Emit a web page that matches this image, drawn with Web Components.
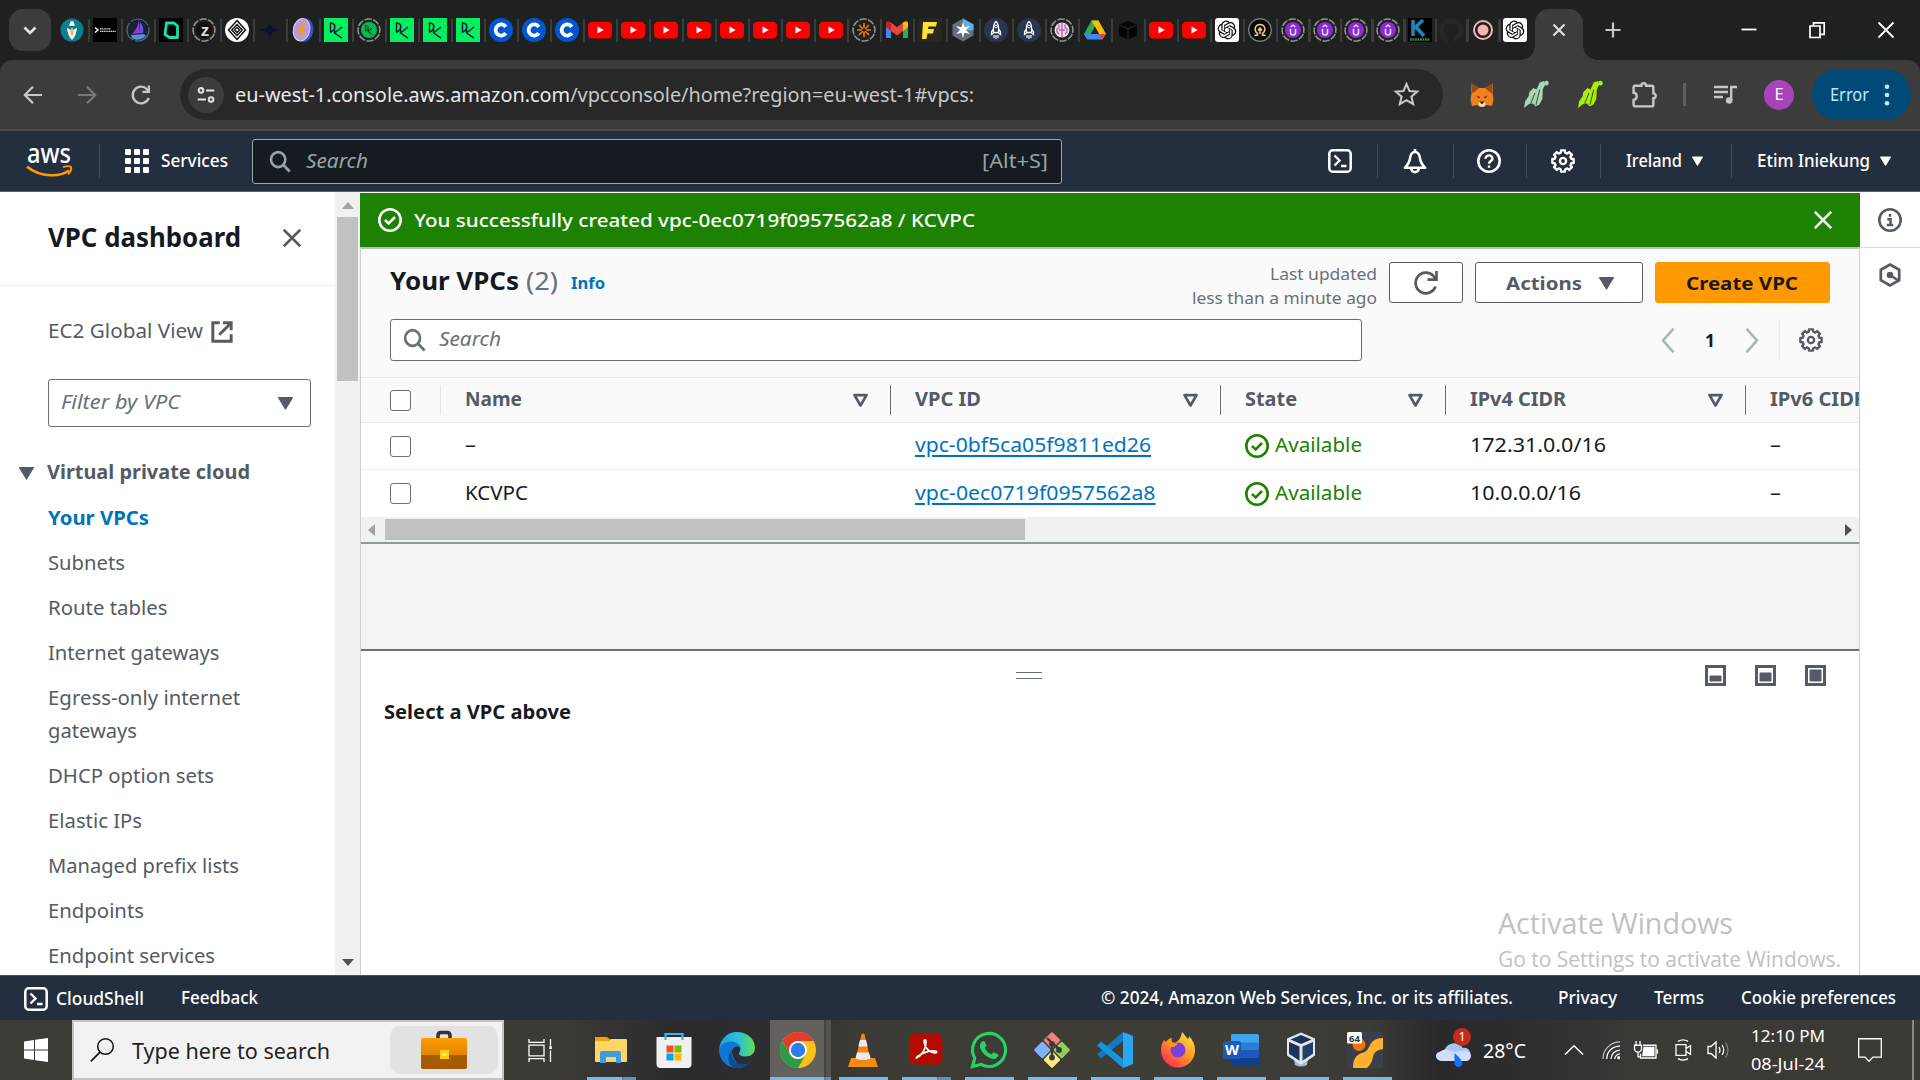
<!DOCTYPE html>
<html lang="en">
<head>
<meta charset="utf-8">
<title>VPC Console</title>
<style>
html,body{margin:0;padding:0}
body{width:1920px;height:1080px;overflow:hidden;background:#fff;font-family:"Noto Sans","Open Sans",sans-serif;font-size:17.5px;line-height:1.36}
</style>
</head>
<body>
<desktop-screen></desktop-screen>
<script>
/* ---------- icon library ---------- */
const ring = (c) => `<circle cx="12" cy="12" r="11" fill="none" stroke="#8e918f" stroke-width="1.6" stroke-dasharray="7.2 1.44" transform="rotate(20 12 12)"/>` + c;
const dc = (s, bg) => bg + `<path d="M6.500 14.500V5c5.500.6 6.200 5.700 0 9.500M10.500 8.500V15l7.500 5.200M18 9l-7.500 6" fill="none" stroke="${s}" stroke-width="1.4" stroke-linejoin="round"/>`;
const gear = (() => {
  let p = '';
  for (let i = 0; i < 8; i++) {
    [[-15, 8.7], [-10.500, 11], [10.500, 11], [15, 8.7]].forEach(([a, r]) => {
      const t = (i * 45 + a) * Math.PI / 180;
      p += (p ? 'L' : 'M') + (12 + r * Math.sin(t)).toFixed(2) + ' ' + (12 - r * Math.cos(t)).toFixed(2);
    });
  }
  return `<path d="${p}Z" fill="none" stroke="currentColor" stroke-width="2.4" stroke-linejoin="round" transform="translate(.2 .2) scale(.983)"/><circle cx="12" cy="12" r="3.100" fill="none" stroke="currentColor" stroke-width="2.400"/>`;
})();
const shellBox = '<rect x="1.300" y="1.300" width="21.400" height="21.400" rx="3.500" fill="none" stroke="currentColor" stroke-width="2.500"/><path d="M6.500 6.500l5 5-5 5M13 17h5.500" fill="none" stroke="currentColor" stroke-width="2.400"/>';
const okIcon = '<circle cx="12" cy="12" r="10.700" fill="none" stroke="currentColor" stroke-width="2.600"/><path d="M7 12l3.600 3.500L17 9" fill="none" stroke="currentColor" stroke-width="2.500"/>';
const rex = (c) => `<path d="M1 25l1-6 3.500-5 .5-3.500L10 6.500l3 1.500 3-6.500L20 0l1.500 3-2.500 5-.5 9-3 5-3.500 1.500-2.500-2.500-4 .500z" fill="${c}"/><circle cx="22.500" cy="2" r="2.200" fill="${c}"/><path d="M7 22l4.500-11m1 11l3.500-14" stroke="#3c3c3c" stroke-width=".9"/>`;
const openai = 'M22.2819 9.8211a5.9847 5.9847 0 0 0-.5157-4.9108 6.0462 6.0462 0 0 0-6.5098-2.9A6.0651 6.0651 0 0 0 4.9807 4.1818a5.9847 5.9847 0 0 0-3.9977 2.9 6.0462 6.0462 0 0 0 .7427 7.0966 5.98 5.98 0 0 0 .511 4.9107 6.051 6.051 0 0 0 6.5146 2.9001A5.9847 5.9847 0 0 0 13.2599 24a6.0557 6.0557 0 0 0 5.7718-4.2058 5.9894 5.9894 0 0 0 3.9977-2.9001 6.0557 6.0557 0 0 0-.7475-7.0729zm-9.022 12.6081a4.4755 4.4755 0 0 1-2.8764-1.0408l.1419-.0804 4.7783-2.7582a.7948.7948 0 0 0 .3927-.6813v-6.7369l2.02 1.1686a.071.071 0 0 1 .038.052v5.5826a4.504 4.504 0 0 1-4.4945 4.4944zm-9.6607-4.1254a4.4708 4.4708 0 0 1-.5346-3.0137l.142.0852 4.783 2.7582a.7712.7712 0 0 0 .7806 0l5.8428-3.3685v2.3324a.0804.0804 0 0 1-.0332.0615L9.74 19.9502a4.4992 4.4992 0 0 1-6.1408-1.6464zM2.3408 7.8956a4.485 4.485 0 0 1 2.3655-1.9728V11.6a.7664.7664 0 0 0 .3879.6765l5.8144 3.3543-2.0201 1.1685a.0757.0757 0 0 1-.071 0l-4.8303-2.7865A4.504 4.504 0 0 1 2.3408 7.872zm16.5963 3.8558L13.1038 8.364 15.1192 7.2a.0757.0757 0 0 1 .071 0l4.8303 2.7913a4.4944 4.4944 0 0 1-.6765 8.1042v-5.6772a.79.79 0 0 0-.407-.667zm2.0107-3.0231l-.142-.0852-4.7735-2.7818a.7759.7759 0 0 0-.7854 0L9.409 9.2297V6.8974a.0662.0662 0 0 1 .0284-.0615l4.8303-2.7866a4.4992 4.4992 0 0 1 6.6802 4.66zM8.3065 12.863l-2.02-1.1638a.0804.0804 0 0 1-.038-.0567V6.0742a4.4992 4.4992 0 0 1 7.3757-3.4537l-.142.0805L8.704 5.459a.7948.7948 0 0 0-.3927.6813zm1.0976-2.3654l2.602-1.4998 2.6069 1.4998v2.9994l-2.5974 1.4997-2.6067-1.4997Z';
const github = 'M12 .297c-6.63 0-12 5.373-12 12 0 5.303 3.438 9.8 8.205 11.385.6.113.82-.258.82-.577 0-.285-.01-1.04-.015-2.04-3.338.724-4.042-1.61-4.042-1.61C4.422 18.07 3.633 17.7 3.633 17.7c-1.087-.744.084-.729.084-.729 1.205.084 1.838 1.236 1.838 1.236 1.07 1.835 2.809 1.305 3.495.998.108-.776.417-1.305.76-1.605-2.665-.3-5.466-1.332-5.466-5.93 0-1.31.465-2.38 1.235-3.22-.135-.303-.54-1.523.105-3.176 0 0 1.005-.322 3.3 1.23.96-.267 1.98-.399 3-.405 1.02.006 2.04.138 3 .405 2.28-1.552 3.285-1.23 3.285-1.23.645 1.653.24 2.873.12 3.176.765.84 1.23 1.91 1.23 3.22 0 4.61-2.805 5.625-5.475 5.92.42.36.81 1.096.81 2.22 0 1.606-.015 2.896-.015 3.286 0 .315.21.69.825.57C20.565 22.092 24 17.592 24 12.297c0-6.627-5.373-12-12-12';

const ICONS = {
  /* favicons */
  flame: '<circle cx="12" cy="12" r="11.500" fill="#0b7f8c"/><path d="M12 22c-3-3-4.500-7-5-12 2 .5 3 1.500 3.500 2L12 10l1.500 2c.5-.500 1.500-1.500 3.500-2-.5 5-2 9-5 12z" fill="#fff"/><path d="M12 10l1.800 4-1.800 5-1.800-5z" fill="#e8b25a"/><path d="M10 5.500h4a1.500 1.500 0 010 2.500h-4a1.500 1.500 0 010-2.500z" fill="#fff"/><circle cx="12" cy="5" r="2" fill="#fff"/>',
  cere: '<rect width="24" height="24" fill="#000"/><path d="M2 9.500l3 2.500-3 2.500" fill="none" stroke="#fff" stroke-width="1.500"/><path d="M7 10.800h11M7 13.400h16" stroke="#ddd" stroke-width="1.300" stroke-dasharray="1.300 .5"/>',
  sail: '<circle cx="12" cy="12" r="11" fill="#1b1f33" stroke="#4b6da0" stroke-width="1.200" stroke-dasharray="20 2"/><path d="M13 1l1 14-8 1c4-4 6-8 7-15z" fill="#8a3ddb"/><path d="M14 4c3 4 4 7 3 11l-3 .500z" fill="#6b4ee0"/><path d="M5 17l13-1 2 2c-4 4-10 5-14 2z" fill="#5a8fd0"/>',
  okx: '<rect width="24" height="24" fill="#000"/><path d="M7.500 5h7.500l3.500 3v11.500h-8L6 16.500z" fill="none" stroke="#16e0b5" stroke-width="2.800" stroke-linejoin="round"/>',
  zring: ring('<circle cx="12" cy="12" r="8" fill="#111"/><text x="13" y="18" font-size="17" font-weight="700" font-family="Liberation Sans" fill="#ddd" text-anchor="middle">z</text>'),
  diamond: '<circle cx="12" cy="12" r="12" fill="#fff"/><path d="M12 2.500l8.500 9.500-8.500 9.500L3.500 12zM12 6.500l5.200 5.500-5.200 5.500L6.800 12z" fill="none" stroke="#111" stroke-width="1.500"/><path d="M12 9.500l2.500 2.500-2.500 2.500L9.500 12z" fill="none" stroke="#111" stroke-width="1.300"/>',
  star4: '<path d="M12 4c1 5 3 7 11 8-8 1-10 3-11 8-1-5-3-7-11-8 8-1 10-3 11-8z" fill="#0a1230"/>',
  bolt: '<ellipse cx="13.500" cy="12" rx="8.800" ry="11.800" fill="#3554c8" transform="rotate(12 12 12)"/><ellipse cx="10.500" cy="12" rx="8.200" ry="11.300" fill="#b99adf" stroke="#ddd2f2" stroke-width="1" transform="rotate(12 12 12)"/><path d="M13 4l-7 9h4l-2 8 8-10h-4l3-7z" fill="#f39a2c"/>',
  dcamp: dc('#05192d', '<rect width="24" height="24" fill="#03ef62"/>'),
  dcring: ring('<circle cx="12" cy="12" r="8" fill="#08b84f"/><g transform="translate(4.500 4.200) scale(.62)">' + dc('#05192d', '') + '</g>'),
  coursera: '<circle cx="12" cy="12" r="12" fill="#0056d2"/><path d="M16.800 15.200a5.600 5.600 0 110-6.400" fill="none" stroke="#fff" stroke-width="3.800"/>',
  yt: '<rect y="3.800" width="24" height="16.800" rx="4.200" fill="#f00"/><path d="M9.500 8.500v7l6.200-3.500z" fill="#fff"/>',
  burst: ring('<path d="M12 5v14M5 12h14M7 7l10 10M17 7L7 17" stroke="#e8741c" stroke-width="1.700"/><circle cx="12" cy="12" r="1.800" fill="#20211f"/>'),
  gmail: '<path d="M1 5v15h5V10z" fill="#4285f4"/><path d="M23 5v15h-5V10z" fill="#34a853"/><path d="M18 4.500l2-1c1.500-.6 3 .2 3 1.800V9l-5 4z" fill="#fbbc04"/><path d="M1 9V5.300c0-1.600 1.500-2.400 3-1.800l2 1V13z" fill="#c5221f"/><path d="M6 4.500l6 4.700 6-4.700V13l-6 4.500L6 13z" fill="#ea4335"/>',
  fyellow: '<rect width="24" height="24" fill="#2a2720"/><path d="M5 4h14l-1 4.500h-7.500l-.5 2.500h6l-1 4.500H9.500L8.500 21H4z" fill="#ffe32e"/>',
  hexstar: '<path d="M12 .500l10.500 6v11L12 23.500l-10.500-6v-11z" fill="#666e78"/><path d="M12 .500l10.500 6v6L12 12z" fill="#5ab0e8"/><path d="M12 4l1.500 5.300L19 8l-4 4 4 4-5.500-1.300L12 20l-1.500-5.300L5 16l4-4-4-4 5.500 1.300z" fill="#fff"/>',
  rocket: '<circle cx="12" cy="12" r="12" fill="#2c3650"/><path d="M12 3.500c3 2.500 3 6 2.500 11h-5C9 9.500 9 6 12 3.500zM9.300 11L7.500 14v2.500l2-1.500M14.700 11l1.800 3v2.500l-2-1.500" fill="none" stroke="#fff" stroke-width="1.300"/><circle cx="12" cy="8.500" r="1.400" fill="none" stroke="#fff"/><path d="M10 17v3M12 17v4M14 17v3" stroke="#fff" stroke-width="1.200"/>',
  pinkring: ring('<circle cx="12" cy="12" r="7.500" fill="#e8dcef"/><path d="M12 5v14M9 6.500v3L7 11v3l2 2M15 6.500v3l2 1.500v3l-2 2M9 12h6" fill="none" stroke="#c25a9a" stroke-width="1.300"/>'),
  drive: '<path d="M8.500 2.500h7L8 16l-3.500 5.500L1 16z" fill="#34a853"/><path d="M8.500 2.500h7L23 16h-7z" fill="#fbbc04"/><path d="M1 16h22l-3.500 5.500h-15z" fill="#4285f4"/><path d="M23 16h-7l3.500 5.500z" fill="#ea4335"/><path d="M12 9l4 7H8z" fill="#20211f"/>',
  cube: '<path d="M12 3l9 3.500v11L12 21.500 3 17.500v-11z" fill="#050505"/><path d="M3.500 7L12 10.500 20.500 7M12 10.500v10.500" stroke="#262826" stroke-width="1.200" fill="none"/>',
  chatgpt: `<rect width="24" height="24" rx="3" fill="#fff"/><path d="${openai}" transform="translate(2.600 2.600) scale(.783)" fill="#111"/>`,
  omega: '<circle cx="12" cy="12" r="11.300" fill="#0a0a0a" stroke="#777" stroke-width="1.400"/><path d="M6.500 17.300h3v-2C5.500 12.500 7 6.500 12 6.500s6.500 6 2.500 8.800v2h3M12 10v6M10 12.500L12 10l2 2.500" fill="none" stroke="#e8d28a" stroke-width="1.500"/>',
  udemy: ring('<circle cx="12" cy="12" r="8" fill="#8a2bd0"/><path d="M9.500 10.800v3.700a2.500 2.500 0 005 0v-3.700M9.700 8.800L12 7.200l2.300 1.600" fill="none" stroke="#e6d6f5" stroke-width="1.600"/>'),
  kcamp: '<rect width="24" height="24" fill="#000"/><path d="M5 2v16M6 10.500l9-8.500M8 9l8 9" fill="none" stroke="#1d86b8" stroke-width="3.600"/><path d="M2 21.500h20" stroke="#3c8a4a" stroke-width="2.400" stroke-dasharray="1.800 .7"/>',
  github: `<path d="${github}" fill="#22282c"/>`,
  rec: '<circle cx="12" cy="12" r="9" fill="none" stroke="#f5b5b3" stroke-width="2"/><circle cx="12" cy="12" r="5.500" fill="#f5b5b3"/>',
  /* browser chrome */
  chevdown: '<path d="M6.500 9.500l5.500 5.500 5.500-5.500" fill="none" stroke="#e3e3e3" stroke-width="2.600"/>',
  close: '<path d="M6.500 6.500l11 11M17.500 6.500l-11 11" stroke="currentColor" stroke-width="2.200"/>',
  plus: '<path d="M12 4.500v15M4.500 12h15" stroke="#c7c7c7" stroke-width="2.200"/>',
  winmin: '<path d="M4.500 11.500h15" stroke="#fff" stroke-width="1.800"/>',
  winmax: '<path d="M5 8h10v11.500H5zM8.500 8V4.800h10.700v11.500H15" fill="none" stroke="#fff" stroke-width="1.700"/>',
  winx: '<path d="M4.500 4.500l15 15M19.500 4.500l-15 15" stroke="#fff" stroke-width="1.800"/>',
  back: '<path d="M21 12H4M12 3.800L3.800 12l8.200 8.200" fill="none" stroke="currentColor" stroke-width="2.200"/>',
  fwd: '<path d="M3 12h17M12 3.800l8.200 8.200-8.200 8.200" fill="none" stroke="currentColor" stroke-width="2.200"/>',
  reload: '<path d="M19.800 15a8.300 8.300 0 11-1.600-8.600L20 8.300" fill="none" stroke="#c7c7c7" stroke-width="2.300"/><path d="M21 2.500V10h-7.500V7.700H18.700V2.500z" fill="#c7c7c7"/>',
  tune: '<g fill="none" stroke="#e3e3e3" stroke-width="2.200"><circle cx="6.500" cy="7" r="2.500"/><path d="M12 7h9M3 17h9"/><circle cx="17.500" cy="17" r="2.500"/></g>',
  starO: '<path d="M12 2l2.900 6.700 7.300.6-5.500 4.800 1.700 7.100L12 17.400l-6.400 3.800 1.700-7.100L1.800 9.300l7.300-.6z" fill="none" stroke="#c7c7c7" stroke-width="2"/>',
  fox: '<path d="M1 .500l8 4.500h6l8-4.500-.500 10 1 6.500-1.500 6-5.500-1-2.500 2h-4l-2.500-2-5.500 1-1.500-6 1-6.500z" fill="#f0821e"/><path d="M1 .500l8 4.500-6.500 5.500zM23 .500l-8 4.500 6.500 5.500z" fill="#9a4a16"/><path d="M9 19.500h6l.5 2-1.500 2h-4l-1.500-2z" fill="#ddd"/><path d="M10 18.500h4l-1 2.300h-2z" fill="#222"/><path d="M6.500 12.500l3.500 1.500-1.200 1.400zM17.500 12.500L14 14l1.200 1.400z" fill="#3a2412"/>',
  rexA: rex('#a6d8b8'), rexB: rex('#a8f000'),
  puzzle: '<path d="M9 3.500a2.200 2.200 0 014.500 0H19a1.500 1.500 0 011.500 1.500v5.500a2.200 2.200 0 010 4.500v6a1.500 1.500 0 01-1.500 1.500H3A1.500 1.500 0 011.500 21v-4.500c4 0 4-6.500 0-6.500V5A1.500 1.500 0 013 3.500z" fill="none" stroke="#c7c7c7" stroke-width="2.300"/>',
  queue: '<path d="M1 4h14M1 9h14M1 14h9" stroke="#c7c7c7" stroke-width="2.400"/><path d="M18.200 17V4H24" fill="none" stroke="#c7c7c7" stroke-width="2.300"/><circle cx="16.200" cy="17.500" r="3.300" fill="#c7c7c7"/>',
  dots3: '<g fill="#c2e7ff"><circle cx="12" cy="3.700" r="2.300"/><circle cx="12" cy="12" r="2.300"/><circle cx="12" cy="20.300" r="2.300"/></g>',
  /* console */
  smile: '<path d="M1 2C15 14 34 13 43 6" fill="none" stroke="#ff9900" stroke-width="2.800"/><path d="M37 2.200c4-1.200 7-1.200 8 0 .8 1.500-.5 5.500-3 8" fill="none" stroke="#ff9900" stroke-width="2"/>',
  grid9: '<g fill="#fff">' + [0, 9, 18].map(y => [0, 9, 18].map(x => `<rect x="${x}" y="${y}" width="6" height="6" rx="1"/>`).join('')).join('') + '</g>',
  search: '<circle cx="10" cy="10" r="7.800" fill="none" stroke="currentColor" stroke-width="2.800"/><path d="M15.500 15.500l7 7" stroke="currentColor" stroke-width="3"/>',
  shell: shellBox,
  bell: '<path d="M1.800 18.800c3-3 4.700-5 5.200-9.300.4-3.700 2-6.500 5-6.500s4.600 2.800 5 6.500c.5 4.300 2.200 6.300 5.200 9.300z" fill="none" stroke="currentColor" stroke-width="2.500" stroke-linejoin="round"/><path d="M12 0v3M8.300 19.500a3.700 3.700 0 007.400 0" stroke="currentColor" stroke-width="2.600" fill="none"/>',
  help: '<circle cx="12" cy="12" r="10.700" fill="none" stroke="currentColor" stroke-width="2.600"/><path d="M8.500 9.700a3.500 3.300 0 117 0c0 2.300-3.500 2.400-3.500 5" fill="none" stroke="currentColor" stroke-width="2.400"/><path d="M12 16.500v2.300" stroke="currentColor" stroke-width="2.400"/>',
  gear, ok: okIcon,
  tri: '<path d="M1 4h22L12 21z" fill="currentColor" stroke="currentColor" stroke-width="2" stroke-linejoin="round"/>',
  trio: '<path d="M3.500 4.500h17L12 19z" fill="none" stroke="currentColor" stroke-width="3.800" stroke-linejoin="round"/>',
  x: '<path d="M3 3l18 18M21 3L3 21" stroke="currentColor" stroke-width="2.700"/>',
  ext: '<path d="M9.500 2H2v20h20v-7.500M13 2h9v8M21 3L9 15" fill="none" stroke="currentColor" stroke-width="3.200"/>',
  refresh: '<path d="M21.600 15.500A10.300 10.300 0 1119.500 5l2 3" fill="none" stroke="currentColor" stroke-width="2.700"/><path d="M22.500 0v8.700h-9" fill="none" stroke="currentColor" stroke-width="2.700"/>',
  left: '<path d="M17.500 1.500L7 12l10.500 10.500" fill="none" stroke="currentColor" stroke-width="2.500"/>',
  right: '<path d="M6.500 1.500L17 12 6.500 22.500" fill="none" stroke="currentColor" stroke-width="2.500"/>',
  info: '<circle cx="12" cy="12" r="10.700" fill="none" stroke="currentColor" stroke-width="2.600"/><path d="M12 6v2.700M9.300 11.300H12.500v5M8.800 17h6.400" fill="none" stroke="currentColor" stroke-width="2.500"/>',
  hex: '<path d="M12 1.500l9.200 5.200v10.600L12 22.500l-9.200-5.200V6.700z" fill="none" stroke="currentColor" stroke-width="2.700"/><circle cx="12" cy="12" r="3.300" fill="currentColor"/><path d="M12 12l7.500 5" stroke="currentColor" stroke-width="2.600"/>',
  p1: '<rect x="1.500" y="1.500" width="18" height="18" fill="none" stroke="currentColor" stroke-width="3"/><rect x="4.500" y="10.500" width="12" height="6" rx="1" fill="currentColor"/>',
  p2: '<rect x="1.500" y="1.500" width="18" height="18" fill="none" stroke="currentColor" stroke-width="3"/><rect x="4.500" y="7.500" width="12" height="9" rx="1" fill="currentColor"/>',
  p3: '<rect x="1.500" y="1.500" width="18" height="18" fill="none" stroke="currentColor" stroke-width="3"/><rect x="4.500" y="4.500" width="12" height="12" rx="1" fill="currentColor"/>',
  /* task bar */
  win: '<path d="M0 3.400l10-1.400v9.500H0zM11 1.800L24 0v11.500H11zM0 12.500h10V22L0 20.600zM11 12.500h13V24l-13-1.800z" fill="#fff"/>',
  wsearch: '<circle cx="15.500" cy="8.500" r="7.800" fill="none" stroke="#111" stroke-width="1.500"/><path d="M10 14.200L.800 23.400" stroke="#111" stroke-width="1.700"/>',
  briefcase: '<defs><linearGradient id="b" x2="0" y2="1"><stop stop-color="#ff9c00"/><stop offset="1" stop-color="#c97200"/></linearGradient></defs><path d="M17 8V4.500Q17 1.500 20 1.500h6q3 0 3 3V8" fill="none" stroke="#333" stroke-width="3.500"/><rect y="7" width="46" height="31" rx="2" fill="url(#b)"/><path d="M0 24h46v12a2 2 0 01-2 2H2a2 2 0 01-2-2z" fill="#a85a00"/><rect x="19" y="19" width="9" height="9" fill="#ffcf00"/><rect x="21.500" y="22" width="4" height="3" fill="#fff08a"/>',
  taskview: '<path d="M1 0v3.500h15V0M1 24v-3.500h15V24M1 6.500h15v11H1z" fill="none" stroke="#fff" stroke-width="1.300"/><path d="M22.500 0v7M22.500 12v12" stroke="#fff" stroke-width="1.300"/><rect x="21.300" y="7.500" width="2.500" height="3" fill="#fff"/>',
  explorer: '<path d="M2 5h12l3 2.500h16V29a1 1 0 01-1 1H3a1 1 0 01-1-1z" fill="#e5a50a"/><path d="M2 9h14l2-2h15a1 1 0 011 1v21a1 1 0 01-1 1H3a1 1 0 01-1-1z" fill="#ffd565"/><path d="M7 31V21a2 2 0 012-2h17a2 2 0 012 2v10h-5v-6H13v6z" fill="#3f9be0"/>',
  store: '<path d="M9.500 8V2h17v6" fill="none" stroke="#35b8e8" stroke-width="2.200"/><path d="M.500 5h35v27a4 4 0 01-4 4h-27a4 4 0 01-4-4z" fill="#f1f1f1"/><path d="M10.500 13.500h7v7h-7z" fill="#f25022"/><path d="M18.500 13.500h7v7h-7z" fill="#7fba00"/><path d="M10.500 21.500h7v7h-7z" fill="#00a4ef"/><path d="M18.500 21.500h7v7h-7z" fill="#ffb900"/><path d="M9.500 8V5M26.500 8V5" stroke="#35b8e8" stroke-width="2.200"/>',
  edge: '<defs><linearGradient id="e" x1="0" x2="1"><stop stop-color="#1d9fe0"/><stop offset=".55" stop-color="#2ac3d6"/><stop offset="1" stop-color="#62dd4e"/></linearGradient></defs><path d="M0 18C1 7 8 0 18 0c10 0 18 7 18 15.500 0 6-4 9-9.500 9-4.500 0-6.500-1.500-6.500-3 0-1 1.500-2 1.500-4.500 0-3-3-6-7.500-6-6 0-12 4-14 7z" fill="url(#e)"/><path d="M0 18c1-5 6-9 13-8.500 5 .5 8.500 4 8.500 7-1-1.500-2-2-3.500-2-3 0-6 3.500-4.500 8.500C15 29 20 34 26 34c-2.500 1.500-5 2-8 2C8 36 0 28 0 18z" fill="#0f78d4"/><path d="M13.500 17c-3 5 0 11 5 14 5 2.500 11 1.500 15-3.500-2.500 5-9 8.500-15.500 8.500-7 0-10-8-8-13 .500-2.500 2-4.500 3.500-6z" fill="#104a8e"/>',
  chrome: '<circle cx="18" cy="18" r="18" fill="#fbc116"/><path d="M2.400 9A18 18 0 0133.600 9H18a9 9 0 00-7.800 13.500z" fill="#e33b2e"/><path d="M2.400 9l7.800 13.500A9 9 0 0025.800 22.500L18 36A18 18 0 012.400 9z" fill="#2a9b48"/><circle cx="18" cy="18" r="9" fill="#fff"/><circle cx="18" cy="18" r="7.200" fill="#2f7bf0"/>',
  vlc: '<path d="M6 26h24l3 9H3z" fill="#f68d11"/><path d="M10 30L16.500 2.500q1.500-2 3 0L26 30q-8 4-16 0z" fill="#f68412"/><path d="M15 8h6l1.700 6.500h-9.400zM12 20.500h12l1.600 6q-7.600 3-15.200 0z" fill="#eaeaea"/>',
  acrobat: '<rect x="1.500" y="1.500" width="33" height="31" rx="6" fill="#b30b00"/><path d="M8.500 26c6-3 10-10 9.500-17 0-1.500-2.200-1.500-2 .5.500 6 5 11 11.500 11.500 1.500 0 1.500-1.800 0-2-6-.8-13 2-18 5.500-1 1-1.500 1.500-1 1.500z" fill="none" stroke="#fff" stroke-width="1.700"/>',
  whatsapp: '<path d="M1.500 34.500l2.300-8.300A16.500 16.500 0 1110 32.300z" fill="none" stroke="#25d366" stroke-width="3.100"/><path d="M10.500 10c1.500-1.500 3-1.200 3.700.5l1.200 2.800c.2 1-1.700 2-1.400 3 1.200 2.800 3.500 5 6.200 6 1 .3 2-2.200 3-1.900l3.200 1.500c1.300.7 1 2 .2 3.200-1.500 2-4 2.200-6.300 1.300-5.500-2-9.800-6-11.200-11-.5-2 .2-4 1.400-5.400z" fill="#25d366"/>',
  git: '<g transform="rotate(45 18 18)"><rect x="5" y="5" width="12.300" height="12.300" rx="1.500" fill="#f37f7f"/><rect x="18.700" y="5" width="12.300" height="12.300" rx="1.500" fill="#8ecf5f"/><rect x="5" y="18.700" width="12.300" height="12.300" rx="1.500" fill="#80b3ff"/><rect x="18.700" y="18.700" width="12.300" height="12.300" rx="1.500" fill="#ffe680"/></g><path d="M13 6l5 5v15M18 11l8 7" fill="none" stroke="#3d3c36" stroke-width="2.400"/><circle cx="18" cy="12" r="2.900" fill="#3d3c36"/><circle cx="25" cy="18" r="2.900" fill="#3d3c36"/><circle cx="18" cy="25.500" r="2.900" fill="#3d3c36"/>',
  vscode: '<path d="M26 0l10 4v28l-10 4z" fill="#2aa5f0"/><path d="M26 9L4 26.500.500 23V22L26 0z" fill="#0d7cc4"/><path d="M26 27L4 9.500.500 13v1L26 36z" fill="#1496de"/>',
  firefox: '<defs><linearGradient id="f" x1="1" y1="0" x2=".2" y2="1"><stop stop-color="#fff04a"/><stop offset=".5" stop-color="#ff9a1f"/><stop offset="1" stop-color="#ff2a57"/></linearGradient></defs><path d="M22 0c3 3 4 5 6 7 1-1 1-2 1-3 4 4 6 9 6 14a17 17 0 01-34 1c0-5 1-8 3-11l2 2c2-3 4-4 6-4-1 2 0 4 1 5 4 0 8-4 9-11z" fill="url(#f)"/><circle cx="18" cy="18" r="7.500" fill="#7b3fe0"/><path d="M6 10c4-1 8 1 12 2-2 1-3 3-5 3-3 0-5-2-7-5z" fill="#ff980e"/>',
  word: '<path d="M9 2h25a2 2 0 012 2v7H8V3z" fill="#41a5ee"/><path d="M8 10.500h28v8H8z" fill="#2b7cd3"/><path d="M8 18.500h28V26H8z" fill="#185abd"/><path d="M8 26h28v6a2 2 0 01-2 2H10a2 2 0 01-2-2z" fill="#103f91"/><rect y="9" width="18" height="18" rx="2" fill="#1b59bd"/><text x="9" y="23.300" font-size="14.500" font-weight="700" font-family="Open Sans" fill="#fff" text-anchor="middle">W</text>',
  vbox: '<path d="M11 27h14l-1 6q-6 3-12 0z" fill="#a9b7cf"/><path d="M18 .500l14 6v17L18 33 4 23.500v-17z" fill="#dfe6f2"/><path d="M18 3l10.500 4.500L18 12 7.500 7.500z" fill="#1c3458"/><path d="M6 10l10.500 4.500v14.200L6 21.800z" fill="#1c3458"/><path d="M30 10l-10.500 4.500v14.200L30 21.800z" fill="#233f66"/>',
  n64: '<rect width="36" height="36" fill="#3b3f4b"/><path d="M6 36c0-9 3-13 9-15 5-1.500 6-4 8-8 2-4 6-7 13-7v11c-6 1-9 3-10 8-1 6-4 9-6 11z" fill="#ffb12e"/><circle cx="12" cy="12.500" r="6.500" fill="#f37312"/><rect x="0" y="0" width="15" height="11.500" rx="1.500" fill="#fff"/><text x="7.500" y="9.500" font-size="9.500" font-weight="700" font-family="Open Sans" fill="#333" text-anchor="middle">64</text>',
  weather: '<path d="M9 20C9 9 23 7 27 15c8-2 11 11 3 13H8C-2 28-1 17 9 20z" fill="#a9c4f7"/><path d="M6 18c7-4 10 2 15 1s11-4 14 3c0 4-2 6-5 6H8c-6 0-8-5-6-8z" fill="#cfdffb"/><path d="M19 20q9 8 7.500 11.500-3.500 5-7.500 0z" fill="#1272f5"/>',
  up: '<path d="M0 9.500L9 .800l9 8.700" fill="none" stroke="#fff" stroke-width="1.500"/>',
  wifi: '<g fill="none" stroke="#fff" stroke-width="1.300"><path d="M1 19C1 9 9 1 19 1" stroke-opacity=".7"/><path d="M5 19C5 11 11 5.500 19 5.500M9.500 19c0-5 4-9.500 9.500-9.500M13.500 19c0-3 2.500-5.500 5.500-5.500"/></g><circle cx="17.500" cy="17.500" r="1.600" fill="#fff"/>',
  battery: '<path d="M9 4h13v12H6.500V12" fill="none" stroke="#fff" stroke-width="1.300"/><path d="M9.500 5.500h11v9H8z" fill="#fff"/><path d="M23.300 8v4" stroke="#fff" stroke-width="1.500"/><path d="M2 0v4M6 0v4M.500 4h7v3a3.500 3.500 0 01-7 0zM4 11v4h3" fill="none" stroke="#fff" stroke-width="1.300"/>',
  cam: '<path d="M1 6h10v11H1zM11 10l4.500-3v9L11 13M3 2.500q5-3 10 0M3 20.500q5 3 10 0" fill="none" stroke="#fff" stroke-width="1.300"/>',
  speaker: '<path d="M1 6.500h3L9 2v16l-5-4.500H1z" fill="none" stroke="#fff" stroke-width="1.300"/><path d="M12 7q2 3 0 6M15 5q3.500 5 0 10" fill="none" stroke="#fff" stroke-width="1.200"/><path d="M18.500 2.500q5 7.500 0 15" fill="none" stroke="#888" stroke-width="1.200"/>',
  notif: '<path d="M.7.700h22.600v17.600H15l-4 4-4-4H.7z" fill="none" stroke="#fff" stroke-width="1.300"/>',
};

/* <ui-icon name w h vb> : one inline vector icon */
customElements.define('ui-icon', class extends HTMLElement {
  connectedCallback() {
    const w = this.getAttribute('w') || 24, h = this.getAttribute('h') || w, vb = this.getAttribute('vb') || '24 24';
    this.attachShadow({ mode: 'open' }).innerHTML =
      `<style>:host{display:block;flex:none}svg{display:block;overflow:visible}</style><svg width="${w}" height="${h}" viewBox="0 0 ${vb}" preserveAspectRatio="none">${ICONS[this.getAttribute('name')]}</svg>`;
  }
});

/* <fit-text w> : one line of text set to an exact advance width */
customElements.define('fit-text', class extends HTMLElement {
  connectedCallback() {
    const w = +this.getAttribute('w');
    this.attachShadow({ mode: 'open' }).innerHTML =
      `<style>:host{display:block;flex:none;width:${w}px;white-space:nowrap}span{display:inline-block;transform-origin:0 50%}</style><span><slot></slot></span>`;
    const s = this.shadowRoot.querySelector('span');
    s.style.transform = `scaleX(${w / s.getBoundingClientRect().width})`;
  }
});

function component(name, css, html) {
  const t = document.createElement('template');
  t.innerHTML = `<style>*{box-sizing:border-box}${css}</style>${html}`;
  customElements.define(name, class extends HTMLElement {
    connectedCallback() {
      if (this.shadowRoot) return;
      this.attachShadow({ mode: 'open' }).append(t.content.cloneNode(true));
    }
  });
}
const ic = (n, w = 24, h = w, vb = '24 24', ml = 0, extra = '') => `<ui-icon name="${n}" w="${w}" h="${h}" vb="${vb}" style="margin-left:${ml}px;${extra}"></ui-icon>`;
const tx = (s, w, ml = 0, extra = '') => `<fit-text w="${w}" style="margin-left:${ml}px;${extra}">${s}</fit-text>`;

/* ---------- tab strip ---------- */
const favs = 'flame cere sail okx zring diamond star4 bolt dcamp dcring dcamp dcamp dcamp coursera coursera coursera yt yt yt yt yt yt yt yt burst gmail fyellow hexstar rocket rocket pinkring drive cube yt yt chatgpt omega'.split(' ');
const favs2 = 'udemy udemy udemy udemy kcamp github rec chatgpt'.split(' ');
component('tab-strip', `
:host{display:flex;height:60px;background:#1f2120;align-items:center}
.menu{width:42px;height:42px;margin-left:9px;border-radius:14px;background:#3c3c3c;display:grid;place-items:center}
.tabs{display:flex;margin-left:9px}
.t{width:33px;display:flex;align-items:center}
.t i{width:2.500px;height:23px;background:#3c3c3c;margin-left:3.800px}
.t.s{width:31.700px}.t.s i{margin-left:3px}
.t:last-child i{visibility:hidden}
.active{position:relative;align-self:flex-end;width:48px;height:51px;margin-left:0;border-radius:14px 14px 0 0;background:#3c3c3c;display:grid;place-items:center;padding-bottom:9px;color:#dedede}
.active::before,.active::after{content:"";position:absolute;bottom:0;width:14px;height:14px}
.active::before{left:-14px;background:radial-gradient(circle at 0 0,#0000 13.500px,#3c3c3c 14px)}
.active::after{right:-14px;background:radial-gradient(circle at 100% 0,#0000 13.500px,#3c3c3c 14px)}
`, `<div class="menu">${ic('chevdown')}</div><div class="tabs">${favs.map(f => `<div class="t">${ic(f)}<i></i></div>`).join('')}${favs2.map(f => `<div class="t s">${ic(f)}<i></i></div>`).join('')}</div>
<div class="active">${ic('close')}</div>${ic('plus', 24, 24, '24 24', 18)}${ic('winmin', 24, 24, '24 24', 112)}${ic('winmax', 24, 24, '24 24', 44)}${ic('winx', 24, 24, '24 24', 45)}`);

/* ---------- address bar ---------- */
component('browser-toolbar', `
:host{display:block;height:71px;background:#1f2120}
.bar{display:flex;align-items:center;height:71px;background:#3c3c3c;border-bottom:2px solid #4a4a48;border-radius:12px 12px 0 0;color:#c7c7c7}
.omni{display:flex;align-items:center;width:1263px;height:51px;margin-left:27px;border-radius:26px;background:#282828;font-size:20.500px;color:#c7c7c7}
.site{width:36px;height:36px;border-radius:50%;background:#3c3c3c;display:grid;place-items:center;margin-left:7.500px}
b{font-weight:400;color:#e8e8e8}
.sep{width:3px;height:23px;background:#5f6063;margin-left:26px}
.av{width:30px;height:30px;border-radius:50%;background:#a943ba;color:#fff;display:grid;place-items:center;margin-left:27px;font-size:16.500px}
.err{display:flex;align-items:center;width:99px;height:51px;border-radius:26px;background:#004a77;color:#c2e7ff;margin-left:18px;font-size:17.500px}
`, `<div class="bar">${ic('back', 24, 24, '24 24', 21)}${ic('fwd', 24, 24, '24 24', 30, 'color:#777')}${ic('reload', 24, 24, '24 24', 30)}
<div class="omni"><div class="site">${ic('tune', 22)}</div>${tx('<b>eu-west-1.console.aws.amazon.com</b>/vpcconsole/home?region=eu-west-1#vpcs:', 739, 11.500)}${ic('starO', 25, 25, '24 24', 420)}</div>
${ic('fox', 24, 24, '24 24', 27)}${ic('rexA', 25, 28, '24 26', 29)}${ic('rexB', 25, 28, '24 26', 29)}${ic('puzzle', 25, 26, '24 24', 30)}<div class="sep"></div>${ic('queue', 24, 24, '24 24', 27)}
<div class="av">E</div><div class="err">${tx('Error', 39, 18)}${ic('dots3', 24, 24, '24 24', 6)}</div></div>`);

/* ---------- AWS navigation ---------- */
component('aws-nav', `
:host{display:flex;align-items:center;height:61px;background:#232f3e;border-bottom:1px solid #56606c;color:#fff;font-size:17.500px;font-weight:500}
.logo{width:46px;height:38px;margin-left:26px;display:flex;flex-direction:column;font-size:27px;line-height:22px;font-weight:500}
.d{width:1px;height:34px;background:#414d5c}
.s{display:flex;align-items:center;width:810px;height:45px;margin-left:25px;border:1px solid #9ba7b0;border-radius:3px;background:#161a21;color:#95a5a6;font-size:19.500px;font-weight:400}
`, `<div class="logo">${tx('aws', 44, 1)}<ui-icon name="smile" w="46" h="12" vb="46 13" style="margin-top:1px"></ui-icon></div>
<div class="d" style="margin-left:27px"></div>${ic('grid9', 24, 24, '24 24', 25)}${tx('Services', 67, 11.500)}
<div class="s" style="margin-left:24.500px">${ic('search', 22, 23, '24 24', 16)}${tx('<i>Search</i>', 62, 14.500)}${tx('[Alt+S]', 66, 614)}</div>
${ic('shell', 24, 24, '24 24', 266)}<div class="d" style="margin-left:25px"></div>${ic('bell', 24, 24, '24 24', 25)}<div class="d" style="margin-left:26px"></div>${ic('help', 24, 24, '24 24', 23)}<div class="d" style="margin-left:25px"></div>${ic('gear', 24, 24, '24 24', 24)}<div class="d" style="margin-left:25px"></div>
${tx('Ireland', 56, 25)}${ic('tri', 11, 12, '24 24', 10)}<div class="d" style="margin-left:28px"></div>${tx('Etim Iniekung', 113, 25)}${ic('tri', 11, 12, '24 24', 10)}`);

/* ---------- side navigation ---------- */
component('side-nav', `
:host{display:flex;width:360px;background:#fff;color:#545b64;font-size:19px;overflow:hidden}
.c{width:335px;overflow:hidden}
.h{display:flex;align-items:center;height:94px;padding:0 0 2px 48px;border-bottom:1px solid #eaeded;font-size:26.500px;font-weight:700;color:#16191f}
.g{display:flex;align-items:center;height:93px;padding:0 0 1px 48px}
.f{display:flex;align-items:center;width:263px;height:48px;margin-left:48px;border:1px solid #687078;border-radius:3px}
.v{display:flex;align-items:center;height:33px;margin-top:29px;padding-left:19px;font-weight:700}
ul{list-style:none;margin:13px 0 0;padding:0 0 0 48px;display:flex;flex-direction:column;gap:12px}
li{display:flex;flex-direction:column}li fit-text{line-height:33px;height:33px}
.on{color:#0073bb;font-weight:700}
.sb{width:25px;background:#f1f1f1;display:flex;flex-direction:column;align-items:center;justify-content:space-between;padding:10px 0 9px}
.th{width:21px;height:164px;background:#c1c1c1;margin-bottom:auto;margin-top:8px}
`, `<div class="c"><div class="h">${tx('VPC dashboard', 193)}${ic('x', 22, 22, '24 24', 40, 'color:#545b64')}</div>
<div class="g">${tx('EC2 Global View', 155)}${ic('ext', 22, 22, '24 24', 8)}</div>
<div class="f">${tx('<i>Filter by VPC</i>', 119, 12, 'color:#687078')}${ic('tri', 15, 16, '24 24', 98)}</div>
<div class="v">${ic('tri', 15, 16)}${tx('Virtual private cloud', 203, 12.500)}</div>
<ul><li class="on">${tx('Your VPCs', 101)}</li>${[['Subnets', 77], ['Route tables', 119.5], ['Internet gateways', 171.5]].map(a => `<li>${tx(...a)}</li>`).join('')}<li>${tx('Egress-only internet', 192)}${tx('gateways', 89)}</li>${[['DHCP option sets', 166], ['Elastic IPs', 94], ['Managed prefix lists', 191], ['Endpoints', 96], ['Endpoint services', 167]].map(a => `<li>${tx(...a)}</li>`).join('')}</ul></div>
<div class="sb"><svg width="12" height="7"><path d="M6 0l6 7H0z" fill="#a3a3a3"/></svg><div class="th"></div><svg width="12" height="7"><path d="M6 7l6-7H0z" fill="#505050"/></svg></div>`);

/* ---------- success flash ---------- */
component('flash-bar', `
:host{display:flex;align-items:center;height:54px;margin-top:1px;background:#1d8102;color:#fff;font-size:18.500px;font-weight:500}
`, `${ic('ok', 24, 24, '24 24', 18)}${tx('<slot></slot>', 561, 12)}${ic('x', 22, 22, '24 24', 837, 'color:#e9ebed')}`);

/* ---------- VPC table ---------- */
const box = '<span class="cb"></span>';
const head = (t, w, last) => `<div class="cell">${tx(t, w)}${last ? '' : `<ui-icon name="trio" w="17" h="17" style="margin-left:auto;margin-right:21px"></ui-icon><i></i>`}</div>`;
const row = (n, nw, id, iw, c, cw) => `<div class="row"><div class="cell">${box}</div><div class="cell">${tx(n, nw)}</div><div class="cell">${tx(`<u style="text-underline-offset:3px;text-decoration-thickness:2px">${id}</u>`, iw, 0, 'color:#0073bb')}</div><div class="cell" style="color:#1d8102">${ic('ok')}${tx('Available', 87, 6)}</div><div class="cell">${tx(c, cw)}</div><div class="cell">${tx('–', 11)}</div></div>`;
component('vpc-table', `
:host{display:block;background:#fff;border-top:2px solid #b9bfc0;color:#16191f;font-size:19px;overflow:hidden}
.top{height:128px;background:#fafafa;display:flex;flex-direction:column}
.a{display:flex;height:70px;align-items:flex-start}
.a>.m{display:flex;align-items:center;height:63px}
.btn{display:flex;align-items:center;height:41px;margin-top:13px;border:1px solid #545b64;border-radius:3px;background:#fff;color:#545b64;font-weight:700;font-size:18.500px}
.b{display:flex;align-items:center;height:42px}
.s{display:flex;align-items:center;width:972px;height:42px;margin-left:30px;border:1px solid #687078;border-radius:3px;background:#fff;color:#687078}
.row{display:grid;grid-template-columns:81px 450px 330px 225px 300px 1fr;height:47px;border-bottom:1px solid #eaeded}
.row:nth-of-type(4){border:0}
.hd{background:#fafafa;border-top:1px solid #eaeded;color:#545b64;font-weight:700;height:46px}
.cell{display:flex;align-items:center;padding-left:24px;min-width:0;overflow:hidden}
.row .cell:first-child{padding-left:30px}
.cell i{width:1px;height:30px;background:#687078}
.cb{width:21px;height:21px;border:1.500px solid #687078;border-radius:3px;background:#fff}
.sb{display:flex;align-items:center;justify-content:space-between;height:25px;background:#f1f1f1;padding:0 8px 0 8px}
.th{width:640px;height:21px;background:#c1c1c1;margin:0 auto 0 10px}
`, `<div class="top"><div class="a"><div class="m">${tx('Your VPCs', 129, 30, 'font-size:25.500px;font-weight:700')}${tx('(2)', 32, 7, 'font-size:25.500px;color:#687078')}${tx('Info', 34, 13, 'font-size:16.500px;font-weight:700;color:#0073bb;padding-top:6px')}</div>
<div style="display:flex;flex-direction:column;align-items:flex-end;width:185px;margin:13px 0 0 587px;font-size:16.500px;line-height:24px;color:#687078">${tx('Last updated', 107)}${tx('less than a minute ago', 185)}</div>
<div class="btn" style="width:74px;margin-left:12px">${ic('refresh', 24, 24, '24 24', 24)}</div>
<div class="btn" style="width:168px;margin-left:12px">${tx('Actions', 76, 30)}${ic('tri', 15, 16, '24 24', 17)}</div>
<div class="btn" style="width:175px;margin-left:12px;background:#ff9900;border-color:#ff9900;color:#16191f">${tx('Create VPC', 112, 30)}</div></div>
<div class="b"><div class="s">${ic('search', 23, 24, '24 24', 12)}${tx('<i>Search</i>', 62, 13)}</div>${ic('left', 24, 27, '24 24', 294, 'color:#aab7b8')}${tx('1', 10, 25, 'font-weight:700;font-size:18px')}${ic('right', 24, 27, '24 24', 25, 'color:#aab7b8')}<span style="width:1px;height:41px;background:#eaeded;margin-left:15px"></span>${ic('gear', 24, 24, '24 24', 19, 'color:#545b64')}</div></div>
<div class="row hd"><div class="cell">${box}<i style="margin-left:auto;background:#e3e6e6"></i></div>${head('Name', 57)}${head('VPC ID', 66)}${head('State', 52)}${head('IPv4 CIDR', 96)}${head('IPv6 CIDR', 97, 1)}</div>
${row('–', 11, 'vpc-0bf5ca05f9811ed26', 236, '172.31.0.0/16', 136)}${row('KCVPC', 63, 'vpc-0ec0719f0957562a8', 240.5, '10.0.0.0/16', 111)}
<div class="sb"><svg width="7" height="12"><path d="M0 6l7-6v12z" fill="#a3a3a3"/></svg><div class="th"></div><svg width="7" height="12"><path d="M7 6L0 0v12z" fill="#505050"/></svg></div>`);

/* ---------- split panel ---------- */
component('split-panel', `
:host{display:flex;flex-direction:column;flex:1;background:#fff;border-top:2px solid #687078;color:#16191f}
.t{display:flex;align-items:center;height:48px;color:#545b64}
.t b{width:26px;height:7px;margin:0 auto 0 656px;border:solid #687078;border-width:1.500px 0}
.wm{margin:auto 0 1px 1138px;color:#c0c1c3}
`, `<div class="t"><b></b>${ic('p1', 21, 21, '21 21')}${ic('p2', 21, 21, '21 21', 29)}${ic('p3', 21, 21, '21 21', 29, 'margin-right:34px')}</div>
${tx('Select a VPC above', 187, 24, 'font-size:19px;font-weight:700;margin-top:1px')}
<div class="wm">${tx('Activate Windows', 235, 0, 'font-size:29.500px;line-height:38px;font-family:Open Sans,sans-serif')}${tx('Go to Settings to activate Windows.', 343, 0, 'font-size:22px;line-height:32px;font-family:Open Sans,sans-serif')}</div>`);

component('main-pane', `
:host{position:relative;display:flex;flex-direction:column;width:1500px;overflow:hidden;background:#fff}
:host::after{content:"";position:absolute;inset:55px 0 0 0;border:solid #ccd1d3;border-width:0 1px;pointer-events:none}
.gap{height:107px;background:#f2f3f3;border-top:2px solid #8d999c}
`, `<flash-bar>You successfully created vpc-0ec0719f0957562a8 / KCVPC</flash-bar><vpc-table></vpc-table><div class="gap"></div><split-panel></split-panel>`);

component('tools-rail', `
:host{display:block;width:60px;background:#fff;color:#545b64}
div{height:56px;padding:16px 0 0 18px;border-bottom:1px solid #d5dbdb}div+div{border:0}
`, `<div>${ic('info')}</div><div style="padding-top:15px">${ic('hex')}</div>`);

component('aws-footer', `
:host{display:flex;align-items:center;height:45px;background:#232f3e;border-top:1px solid #48535f;color:#fff;font-size:17.500px;font-weight:500}
`, `${ic('shell', 24, 24, '24 24', 24, 'margin-top:2px')}${tx('CloudShell', 88, 7.500, 'margin-top:1px')}${tx('Feedback', 77, 37.500)}${tx('© 2024, Amazon Web Services, Inc. or its affiliates.', 412, 843)}${tx('Privacy', 59, 45)}${tx('Terms', 50, 37)}${tx('Cookie preferences', 155, 37)}`);

/* ---------- Windows task bar ---------- */
component('task-bar', `
:host{display:flex;align-items:center;height:60px;color:#fff;background:linear-gradient(90deg,#3d3b35 0,#3b3a34 560px,#2b2b2f 680px,#2e2e30 770px,#3b3a34 860px,#3e3d36 1150px,#3b3a35 1370px,#29292c 1440px,#2c2c2d 1500px,#3a3934 1640px,#3b3a35 1920px)}
.q{display:flex;align-items:center;width:432px;height:60px;margin-left:24px;border:2px solid #c3c3c3;background:#f2f2f2;color:#222;font-size:22px}
.hl{width:108px;height:48px;border-radius:10px;background:#e2e2e2;margin-left:60px;display:grid;place-items:center}
.tv{width:75px;padding-left:24px}
.app{width:63px;height:60px;display:flex;flex-direction:column;align-items:center;justify-content:flex-end}
.app u{height:3px;width:49px;background:#76b9ed;margin-left:2px;margin-top:-3px}
.app.g u{background:linear-gradient(90deg,#76b9ed 35px,#4f82ab 35px 36.500px,#5f93be 36.500px)}
.app.n u{visibility:hidden}
.app.on{background:linear-gradient(90deg,#0000 2px,#62615d 2px 56px,#45443f 56px 58px,#54534f 58px)}
.app.on u{width:61px;margin-left:2px;background:linear-gradient(90deg,#76b9ed 54px,#4f82ab 54px 56px,#5f93be 56px)}
.w{position:relative;margin-left:37px}
.w span{position:absolute;left:18px;top:-5px;width:18px;height:18px;border-radius:50%;background:#c42b1c;font-size:12.500px;line-height:18px;text-align:center}
.clock{display:flex;flex-direction:column;margin-left:22px;font-size:17px;line-height:28px}
`, `${ic('win', 24, 24, '24 24', 24)}
<div class="q">${ic('wsearch', 24, 24, '24 24', 16)}${tx('Type here to search', 198, 18, 'padding-top:2px')}<div class="hl">${ic('briefcase', 46, 38, '46 38')}</div></div>
<div class="tv">${ic('taskview', 24, 23)}</div>
${[['explorer', 'g', 0], ['store', 'n', 0], ['edge', 'n', 0], ['chrome', 'on', 3], ['vlc', '', 0], ['acrobat', 'g', 0], ['whatsapp', '', 0], ['git', '', 0], ['vscode', '', 0], ['firefox', '', 0], ['word', '', 0], ['vbox', '', 6], ['n64', '', 3]].map(([n, c, r]) => `<div class="app ${c}">${ic(n, 36, 36, '36 36', 0, `margin:auto;padding-right:${r}px`)}<u></u></div>`).join('')}
<div class="w">${ic('weather', 37, 34, '36 34')}<span>1</span></div>${tx('28°C', 43, 11, 'font-size:20px;padding-top:2px')}
${ic('up', 18, 10, '18 10', 39)}${ic('wifi', 19, 19, '20 20', 19)}${ic('battery', 24, 18, '24 17', 13)}${ic('cam', 16, 22, '16 23', 17)}${ic('speaker', 22, 20, '22 20', 16)}
<div class="clock">${tx('12:10 PM', 74)}${tx('08-Jul-24', 74)}</div>${ic('notif', 24, 24, '24 23', 33)}<span style="width:2px;height:60px;background:#8a8985;margin-left:30px"></span>`);

component('desktop-screen', `
:host{display:flex;flex-direction:column;width:1920px;height:1080px}
.body{display:flex;height:783px}
`, `<tab-strip></tab-strip><browser-toolbar></browser-toolbar><aws-nav></aws-nav><div class="body"><side-nav></side-nav><main-pane></main-pane><tools-rail></tools-rail></div><aws-footer></aws-footer><task-bar></task-bar>`);
</script>
</body>
</html>
